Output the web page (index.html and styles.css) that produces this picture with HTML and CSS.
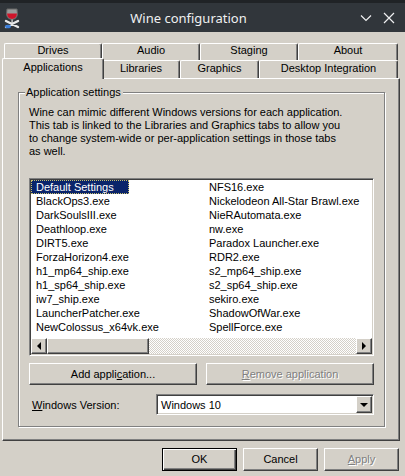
FILE: index.html
```html
<!DOCTYPE html>
<html lang="en">
<head>
    <meta charset="UTF-8">
    <title>Wine configuration</title>
    <link rel="stylesheet" href="styles.css">
</head>
<body>
    <!-- Title bar -->
    <div class="titlebar">
        <svg class="app-icon" width="18" height="22" viewBox="0 0 18 22">
            <path d="M4 2 L14 2 L14.5 7 Q14 12 9 12.5 Q4 12 3.5 7 Z" fill="#9a9a9a" stroke="#666" stroke-width="1"/>
            <path d="M4 6.5 L14 6.5 Q13.5 11.5 9 12 Q4.5 11.5 4 6.5 Z" fill="#d0142a"/>
            <rect x="8.3" y="12.5" width="1.6" height="4" fill="#bbb"/>
            <path d="M3 14 L15 20 M15 14 L3 20" stroke="#e8e8e8" stroke-width="2.4" stroke-linecap="round"/>
            <ellipse cx="5" cy="19.5" rx="3" ry="1.8" fill="#3b7dd8"/>
        </svg>
        <span class="title">Wine configuration</span>
        <div class="controls">
            <svg width="12" height="12" viewBox="0 0 12 12"><path d="M1 3.5 L6 8.5 L11 3.5" fill="none" stroke="#eff0f1" stroke-width="1.2"/></svg>
            <svg width="12" height="12" viewBox="0 0 12 12"><path d="M1 1 L11 11 M11 1 L1 11" fill="none" stroke="#eff0f1" stroke-width="1.2"/></svg>
        </div>
    </div>

    <div class="window">
        <!-- Tabs -->
        <div class="tabs">
            <div class="tab-row back">
                <div class="tab w98">Drives</div>
                <div class="tab w98">Audio</div>
                <div class="tab w98">Staging</div>
                <div class="tab w100">About</div>
            </div>
            <div class="tab-row front">
                <div class="tab w98 selected">Applications</div>
                <div class="tab w78">Libraries</div>
                <div class="tab w79">Graphics</div>
                <div class="tab w139">Desktop Integration</div>
            </div>
        </div>

        <div class="panel">
            <div class="group">
                <span class="group-label">Application settings</span>
                <p class="desc">
                    Wine can mimic different Windows versions for each application.<br>
                    This tab is linked to the Libraries and Graphics tabs to allow you<br>
                    to change system-wide or per-application settings in those tabs<br>
                    as well.
                </p>

                <!-- Application list -->
                <div class="listbox">
                    <div class="list-items">
                        <div class="item"><span class="current">Default Settings</span></div>
                        <div class="item">BlackOps3.exe</div>
                        <div class="item">DarkSoulsIII.exe</div>
                        <div class="item">Deathloop.exe</div>
                        <div class="item">DIRT5.exe</div>
                        <div class="item">ForzaHorizon4.exe</div>
                        <div class="item">h1_mp64_ship.exe</div>
                        <div class="item">h1_sp64_ship.exe</div>
                        <div class="item">iw7_ship.exe</div>
                        <div class="item">LauncherPatcher.exe</div>
                        <div class="item">NewColossus_x64vk.exe</div>
                        <div class="item">NFS16.exe</div>
                        <div class="item">Nickelodeon All-Star Brawl.exe</div>
                        <div class="item">NieRAutomata.exe</div>
                        <div class="item">nw.exe</div>
                        <div class="item">Paradox Launcher.exe</div>
                        <div class="item">RDR2.exe</div>
                        <div class="item">s2_mp64_ship.exe</div>
                        <div class="item">s2_sp64_ship.exe</div>
                        <div class="item">sekiro.exe</div>
                        <div class="item">ShadowOfWar.exe</div>
                        <div class="item">SpellForce.exe</div>
                    </div>
                    <div class="hscroll">
                        <div class="raised scroll-btn"><span class="arrow-left"></span></div>
                        <div class="raised thumb"></div>
                        <div class="track"></div>
                        <div class="raised scroll-btn"><span class="arrow-right"></span></div>
                    </div>
                </div>

                <div class="btn-row">
                    <div class="button raised wide">Add appli<u>c</u>ation...</div>
                    <div class="button raised wide disabled"><u>R</u>emove application</div>
                </div>

                <div class="version-row">
                    <span class="version-label"><u>W</u>indows Version:</span>
                    <div class="combo">
                        <span class="combo-text">Windows 10</span>
                        <div class="raised combo-btn"><span class="arrow-down"></span></div>
                    </div>
                </div>
            </div>
        </div>

        <!-- Dialog buttons -->
        <div class="dialog-buttons">
            <div class="button raised default">OK</div>
            <div class="button raised">Cancel</div>
            <div class="button raised disabled"><u>A</u>pply</div>
        </div>
    </div>
</body>
</html>
```

FILE: styles.css
```css
/* Basic Styling */
body {
    margin: 0;
    width: 405px;
    height: 476px;
    overflow: hidden;
    background-color: #d4d0c8;
    font-family: "Liberation Sans", Arial, sans-serif;
    font-size: 11px;
    color: #000;
}

/* Title bar */
.titlebar {
    height: 29px;
    border-top: 3px solid #202326;
    background-color: #31363b;
    display: flex;
    align-items: center;
    position: relative;
}

.app-icon {
    margin-left: 3px;
}

.title {
    flex: 1;
    text-align: center;
    margin-left: -4px;
    font-family: "Noto Sans", sans-serif;
    font-size: 13px;
    color: #eff0f1;
}

.controls {
    display: flex;
    gap: 11px;
    margin-right: 10px;
}

/* Classic 3D shapes */
.raised {
    box-sizing: border-box;
    background-color: #d4d0c8;
    border: 1px solid;
    border-color: #fff #404040 #404040 #fff;
    box-shadow: inset -1px -1px #808080;
}

/* Tabs */
.tabs {
    margin: 11px 0 0 4px;
}

.tab-row {
    display: flex;
}

.tab-row.back {
    height: 17px;
}

.tab-row.front {
    height: 18px;
    align-items: flex-end;
}

.tab {
    box-sizing: border-box;
    height: 100%;
    text-align: center;
    background-color: #d4d0c8;
    border-top: 1px solid #fff;
    border-left: 1px solid #fff;
    border-right: 1px solid #404040;
    border-radius: 2px 2px 0 0;
    box-shadow: inset -1px 0 #808080;
}

.tab-row.back .tab {
    line-height: 13px;
}

.tab-row.front .tab {
    line-height: 14px;
}

.w78 { width: 78px; }
.w79 { width: 79px; }
.w98 { width: 98px; }
.w100 { width: 100px; }
.w139 { width: 139px; }

.tab.selected {
    position: relative;
    z-index: 1;
    width: 102px;
    height: 21px;
    margin: 0 -2px -1px -2px;
    padding-top: 1px;
}

/* Tab panel */
.panel {
    box-sizing: border-box;
    height: 363px;
    margin: 0 5px 0 2px;
    padding: 13px 14px 0 15px;
    border: 1px solid;
    border-color: #fff #404040 #404040 #fff;
    box-shadow: inset -1px -1px #808080;
}

/* Group box */
.group {
    position: relative;
    box-sizing: border-box;
    height: 335px;
    border: 1px solid #808080;
    box-shadow: inset 1px 1px #fff, 1px 1px #fff;
}

.group-label {
    position: absolute;
    top: -7px;
    left: 6px;
    padding: 0 2px 0 1px;
    line-height: 13px;
    background-color: #d4d0c8;
}

.desc {
    margin: 0;
    padding: 13px 10px 0 10px;
    line-height: 13px;
    height: 52px;
}

/* List box */
.listbox {
    box-sizing: border-box;
    width: 345px;
    height: 178px;
    margin: 20px 0 0 10px;
    background-color: #fff;
    border: 1px solid;
    border-color: #808080 #fff #fff #808080;
    box-shadow: inset 1px 1px #404040, inset -1px -1px #d4d0c8;
    padding: 1px;
}

.list-items {
    display: grid;
    grid-auto-flow: column;
    grid-template-rows: repeat(11, 14px);
    grid-template-columns: 173px 168px;
    height: 154px;
}

.item {
    line-height: 14px;
    padding-left: 5px;
    white-space: nowrap;
}

.item .current {
    display: inline-block;
    width: 93px;
    margin: -1px 0 0 -5px;
    padding-left: 5px;
    line-height: 14px;
    background-color: #0a246a;
    color: #fff;
    outline: 1px dotted #c8c070;
    outline-offset: -1px;
}

/* Horizontal scrollbar */
.hscroll {
    display: flex;
    height: 16px;
    margin-top: 4px;
}

.scroll-btn {
    width: 16px;
    height: 16px;
    display: flex;
    align-items: center;
    justify-content: center;
}

.thumb {
    width: 102px;
    height: 16px;
}

.track {
    flex: 1;
    background: repeating-conic-gradient(#d4d0c8 0 25%, #fff 0 50%) 0 0 / 2px 2px;
}

.arrow-left {
    border-top: 4px solid transparent;
    border-bottom: 4px solid transparent;
    border-right: 4px solid #000;
    margin-left: -1px;
}

.arrow-right {
    border-top: 4px solid transparent;
    border-bottom: 4px solid transparent;
    border-left: 4px solid #000;
}

.arrow-down {
    border-left: 4px solid transparent;
    border-right: 4px solid transparent;
    border-top: 4px solid #000;
    margin-top: 1px;
}

/* Buttons */
.button {
    width: 75px;
    height: 23px;
    line-height: 21px;
    text-align: center;
}

.button.wide {
    width: 168px;
    height: 22px;
    line-height: 20px;
}

.button.disabled {
    color: #808080;
    text-shadow: 1px 1px #fff;
}

.button.default {
    border: 1px solid #000;
    box-shadow: inset 1px 1px #fff, inset -1px -1px #404040, inset -2px -2px #808080;
}

.btn-row {
    display: flex;
    gap: 9px;
    margin: 7px 0 0 10px;
}

/* Windows version */
.version-row {
    display: flex;
    align-items: center;
    margin: 9px 0 0 13px;
}

.version-label {
    width: 124px;
}

.combo {
    box-sizing: border-box;
    width: 218px;
    height: 21px;
    display: flex;
    align-items: center;
    background-color: #fff;
    border: 1px solid;
    border-color: #808080 #fff #fff #808080;
    box-shadow: inset 1px 1px #404040, inset -1px -1px #d4d0c8;
    padding: 1px;
}

.combo-text {
    flex: 1;
    padding-left: 3px;
}

.combo-btn {
    width: 16px;
    height: 17px;
    display: flex;
    align-items: center;
    justify-content: center;
}

/* Dialog buttons */
.dialog-buttons {
    display: flex;
    justify-content: flex-end;
    gap: 6px;
    margin: 7px 6px 0 0;
}
```
